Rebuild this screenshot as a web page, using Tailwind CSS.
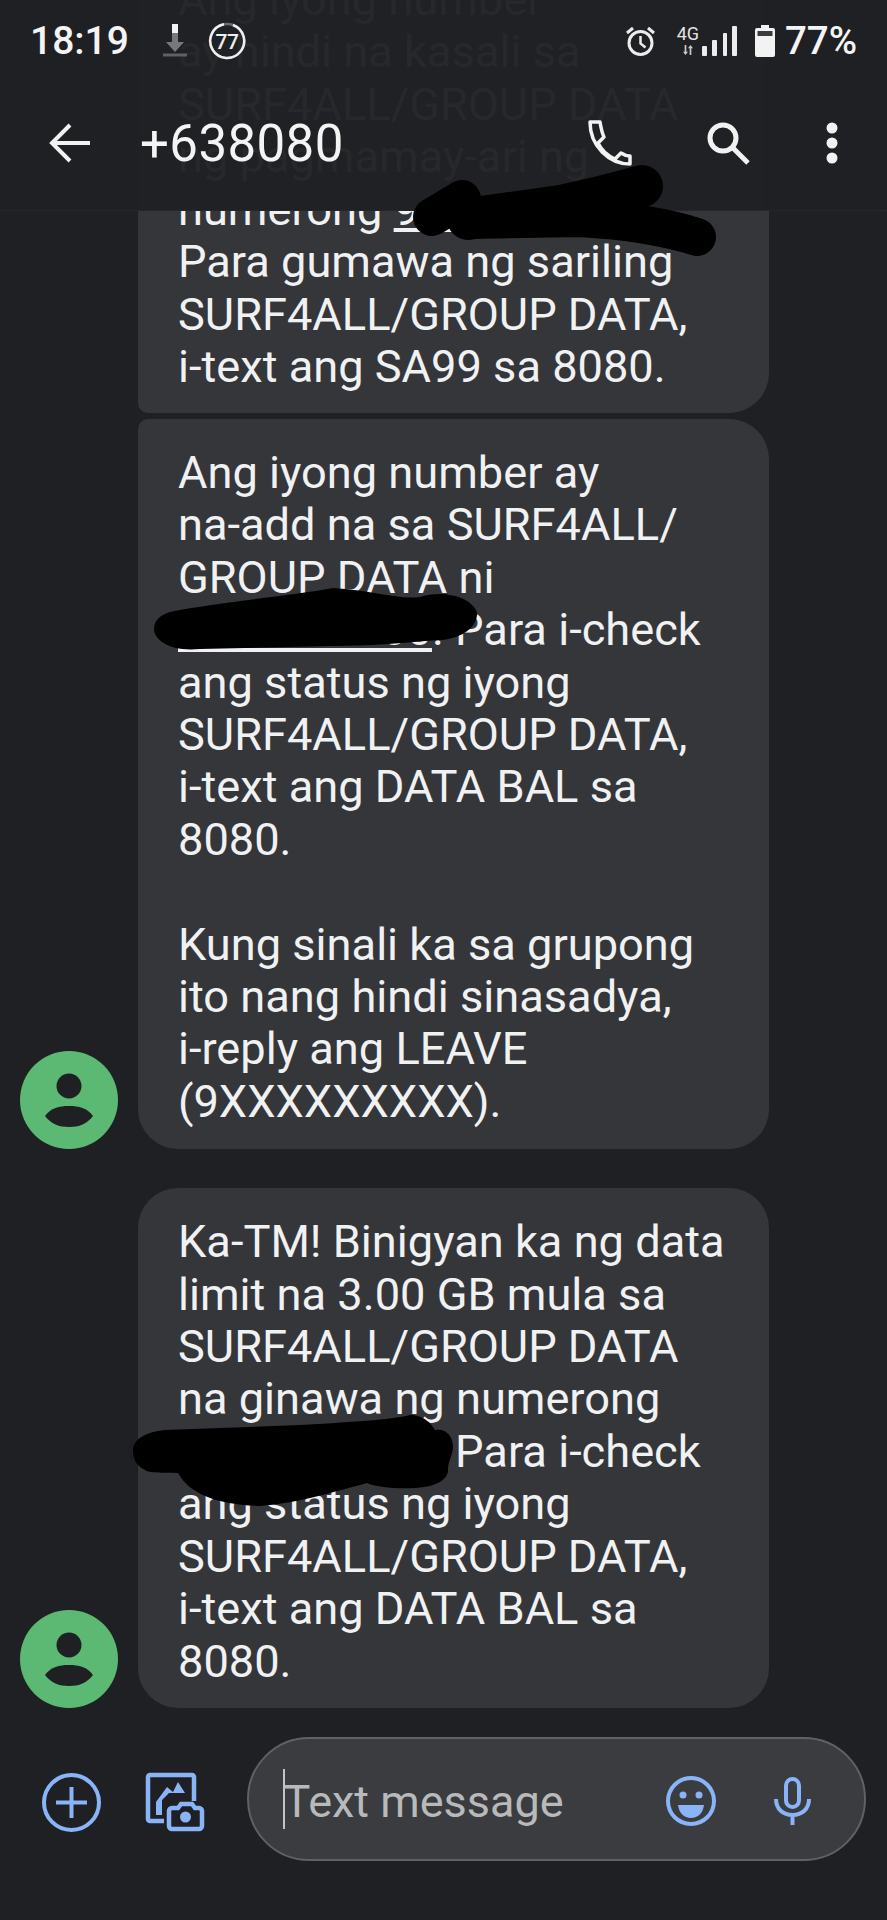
<!DOCTYPE html>
<html>
<head>
<meta charset="utf-8">
<script src="https://cdn.jsdelivr.net/npm/@tailwindcss/browser@4"></script>
</head>
<body class="bg-[#1f2023]">
<div class="relative flex h-[1920px] w-[887px] flex-col overflow-hidden bg-[#1f2023] font-['Roboto',sans-serif] text-[#f0f1f2]">

  <header class="relative h-[211px] shrink-0 overflow-hidden border-b border-dotted border-[#2c2d31]">
    <div class="absolute left-[138px] top-0 h-[211px] w-[625px] bg-[#202124] pl-[40px] text-[45.200px] leading-[52.400px] text-[#27282b]">
      <p class="-mt-[26px]">Ang iyong number</p>
      <p>ay hindi na kasali sa</p>
      <p>SURF4ALL/GROUP DATA</p>
      <p>ng pagmamay-ari ng</p>
    </div>
    <div class="relative flex h-[80px] items-center justify-between pl-[30px] pr-[30px] pt-[2px]">
      <div class="flex items-center">
        <span class="text-[39px] font-medium leading-none text-[#f4f4f4]">18:19</span>
        <svg class="ml-[33px] h-[34px] w-[26px]" viewBox="0 0 26 34" fill="none">
          <path d="M10 9h6v9h6l-9 10-9-10h6z" fill="#77787b"/><rect x="10" y="0" width="6" height="9" fill="#f2f2f2"/><path d="M1 31h24" stroke="#606165" stroke-width="3"/>
        </svg>
        <svg class="ml-[20px] h-[38px] w-[38px]" viewBox="0 0 38 38" fill="none">
          <circle cx="19" cy="19" r="17" stroke="#6b6c6f" stroke-width="2.500"/>
          <path d="M25 3A17 17 0 1 1 16 2.300" stroke="#efefef" stroke-width="2.500"/>
          <text x="19" y="26.500" text-anchor="middle" font-family="Roboto" font-size="21" font-weight="500" letter-spacing="-0.500" fill="#efefef">77</text>
        </svg>
      </div>
      <div class="flex items-center">
        <svg class="h-[32px] w-[31px]" viewBox="0 0 31 32" fill="none" stroke="#ececec">
          <circle cx="15.500" cy="18" r="11.500" stroke-width="3"/><path d="M15.500 11v7.500l5 4" stroke-width="2.500"/><path d="M2 8l6-5M29 8l-6-5" stroke-width="3"/>
        </svg>
        <div class="ml-[20px] flex h-[32px] w-[24px] flex-col items-center text-[#e4e4e4]">
          <span class="text-[18px] leading-[17px]">4G</span>
          <svg class="mt-[3px] h-[10px] w-[12px]" viewBox="0 0 14 12" fill="#c9c9c9"><path d="M3 0h2v8h2l-3 4-3-4h2zM9 12h2V4h2L10 0 7 4h2z"/></svg>
        </div>
        <svg class="ml-[1px] h-[30px] w-[36px]" viewBox="0 0 36 30" fill="#ececec">
          <rect x="1" y="20" width="5" height="10" rx="1"/><rect x="11" y="14" width="5" height="16" rx="1"/><rect x="22" y="7" width="4" height="23" rx="1"/><rect x="31" y="0" width="5" height="30" rx="1"/>
        </svg>
        <svg class="ml-[18px] h-[32px] w-[20px]" viewBox="0 0 20 32" fill="#f2f2f2">
          <path d="M6 0h8v3h4a2 2 0 0 1 2 2v25a2 2 0 0 1-2 2H2a2 2 0 0 1-2-2V5a2 2 0 0 1 2-2h4z"/><rect x="2.500" y="6" width="15" height="5" fill="#3a3b3e"/>
        </svg>
        <span class="ml-[10px] text-[38.500px] font-medium leading-none text-[#f4f4f4]">77%</span>
      </div>
    </div>
    <div class="relative flex h-[104px] items-center pl-[49px] pr-[49px] pt-[22px]">
      <svg class="h-[40px] w-[41px]" viewBox="0 0 41 40" fill="none" stroke="#f2f2f2" stroke-width="4">
        <path d="M41 20H4M21 2L3 20l18 18"/>
      </svg>
      <span class="ml-[50px] text-[51px] leading-none tracking-[0.400px] text-[#f4f4f4]">+638080</span>
      <svg class="ml-auto h-[46px] w-[46px]" viewBox="0 0 46 46" fill="none" stroke="#f2f2f2" stroke-width="3.500" stroke-linejoin="round">
        <path d="M3 2h10c1 6 2 11 4 15l-6 6c4 8 10 13 17 16l6-6c3 2 6 3 9 3v8C22 44 3 26 3 2z"/>
      </svg>
      <svg class="ml-[73px] h-[44px] w-[44px]" viewBox="0 0 44 44" fill="none" stroke="#f2f2f2" stroke-width="5">
        <circle cx="17" cy="17" r="13"/><path d="M26 26l16 16"/>
      </svg>
      <svg class="ml-[76px] h-[42px] w-[12px]" viewBox="0 0 12 42" fill="#f2f2f2">
        <circle cx="6" cy="6" r="5.500"/><circle cx="6" cy="21" r="5.500"/><circle cx="6" cy="36" r="5.500"/>
      </svg>
    </div>
  </header>

  <main class="min-h-0 flex-1 overflow-hidden">
    <article class="ml-[138px] h-[202px] w-[631px] overflow-hidden rounded-bl-[10px] rounded-br-[40px] bg-[#35363a] pl-[40px] text-[45.200px] leading-[52.400px]">
      <p class="-mt-[27px]">numerong <span class="underline">9000000000</span></p>
      <p>Para gumawa ng sariling</p>
      <p>SURF4ALL/GROUP DATA,</p>
      <p>i-text ang SA99 sa 8080.</p>
    </article>

    <div class="mt-[6px] flex items-end">
      <svg class="ml-[20px] h-[98px] w-[98px] shrink-0" viewBox="0 0 98 98">
        <circle cx="49" cy="49" r="49" fill="#5bb974"/><circle cx="49" cy="35" r="12.500" fill="#1f2023"/><path d="M25 65c6-8 14-10 24-10s18 2 24 10c-6 8-14 11-24 11s-18-3-24-11z" fill="#1f2023"/>
      </svg>
      <article class="ml-[20px] w-[631px] rounded-[40px] rounded-tl-[10px] bg-[#35363a] pb-[21px] pl-[40px] pt-[28px] text-[45.200px] leading-[52.400px]">
        <p>Ang iyong number ay</p>
        <p>na-add na sa SURF4ALL/</p>
        <p>GROUP DATA ni</p>
        <p><span class="underline">9000000000</span>. Para i-check</p>
        <p>ang status ng iyong</p>
        <p>SURF4ALL/GROUP DATA,</p>
        <p>i-text ang DATA BAL sa</p>
        <p>8080.</p>
        <p class="h-[52.400px]"></p>
        <p>Kung sinali ka sa grupong</p>
        <p>ito nang hindi sinasadya,</p>
        <p>i-reply ang LEAVE</p>
        <p>(9XXXXXXXXX).</p>
      </article>
    </div>

    <div class="mt-[39px] flex items-end">
      <svg class="ml-[20px] h-[98px] w-[98px] shrink-0" viewBox="0 0 98 98">
        <circle cx="49" cy="49" r="49" fill="#5bb974"/><circle cx="49" cy="35" r="12.500" fill="#1f2023"/><path d="M25 65c6-8 14-10 24-10s18 2 24 10c-6 8-14 11-24 11s-18-3-24-11z" fill="#1f2023"/>
      </svg>
      <article class="ml-[20px] w-[631px] rounded-[40px] bg-[#35363a] pb-[20px] pl-[40px] pt-[28px] text-[45.200px] leading-[52.400px]">
        <p>Ka-TM! Binigyan ka ng data</p>
        <p>limit na 3.00 GB mula sa</p>
        <p>SURF4ALL/GROUP DATA</p>
        <p>na ginawa ng numerong</p>
        <p>9000000000. Para i-check</p>
        <p>ang status ng iyong</p>
        <p>SURF4ALL/GROUP DATA,</p>
        <p>i-text ang DATA BAL sa</p>
        <p>8080.</p>
      </article>
    </div>
  </main>

  <footer class="flex h-[212px] shrink-0 items-start pl-[42px] pr-[21px] pt-[29px]">
    <svg class="mt-[36px] h-[60px] w-[60px] shrink-0" viewBox="0 0 60 60" fill="none" stroke="#8ab4f8" stroke-width="4">
      <circle cx="29.500" cy="29.500" r="27.500"/><path d="M29.500 14v31M14 29.500h31"/>
    </svg>
    <svg class="ml-[43px] mt-[35px] h-[60px] w-[60px] shrink-0" viewBox="0 0 60 60" fill="none" stroke="#8ab4f8" stroke-width="4.500">
      <path d="M19 49H5a2 2 0 0 1-2-2V5a2 2 0 0 1 2-2h42a2 2 0 0 1 2 2v24"/>
      <path d="M11 43V30L22 15l6 5 5-10 7 11H24l-7 7v15z" fill="#8ab4f8" stroke="none"/>
      <path d="M27 36h6l3-4h11l3 4h4a3 3 0 0 1 3 3v15a3 3 0 0 1-3 3H27a3 3 0 0 1-3-3V39a3 3 0 0 1 3-3z"/>
      <circle cx="40.500" cy="45" r="5.500" fill="#8ab4f8" stroke="none"/>
    </svg>
    <div class="ml-[42px] flex h-[124px] flex-1 items-center rounded-[62px] border-2 border-[#5f6164] bg-[#3a3c3f] pl-[34px] pr-[53px] pt-[4px]">
      <span class="-mt-[4px] h-[60px] w-[1.500px] bg-[#c4c4c4]"></span>
      <span class="-ml-[1px] text-[45px] leading-none text-[#b8b9bb]">Text message</span>
      <svg class="ml-auto h-[50px] w-[50px]" viewBox="0 0 50 50">
        <circle cx="25" cy="25" r="23" fill="none" stroke="#8ab4f8" stroke-width="4"/><circle cx="17" cy="19" r="3.500" fill="#8ab4f8"/><circle cx="33" cy="19" r="3.500" fill="#8ab4f8"/><path d="M12 29h26c-1 8-6 13-13 13s-12-5-13-13z" fill="#8ab4f8"/>
      </svg>
      <svg class="ml-[58px] h-[48px] w-[37px]" viewBox="0 0 37 48" fill="none" stroke="#8ab4f8" stroke-width="4">
        <rect x="12" y="2" width="13" height="28" rx="6.500" fill="#3a3c3f"/><path d="M2 22c0 10 7 16 16.500 16S35 32 35 22M18.500 38v10"/>
      </svg>
    </div>
  </footer>

  <svg class="pointer-events-none absolute left-0 top-0 h-[1920px] w-[887px]" viewBox="0 0 887 1920" fill="none" stroke="#000" stroke-linecap="round" stroke-linejoin="round">
    <path d="M432 217L462 199" stroke-width="38"/>
    <path d="M468 219L560 206Q600 198 642 186" stroke-width="42"/>
    <path d="M468 220L580 218Q650 222 697 237" stroke-width="38"/>
    <path fill="#000" stroke="none" d="M170 612C220 602 290 596 333 588C370 590 400 600 420 597C440 590 470 595 477 612C478 625 465 638 440 640C400 643 370 646 330 646L200 649C170 652 155 640 154 630C154 620 160 615 170 612Z"/>
    <path fill="#000" stroke="none" d="M133 1450C133 1440 145 1432 165 1430L300 1425C350 1422 390 1420 410 1415C425 1415 432 1425 435 1430C445 1428 453 1435 453 1447C453 1455 448 1460 448 1470C448 1480 435 1487 415 1488C395 1489 375 1487 367 1483C340 1490 300 1503 260 1506C220 1505 190 1495 178 1473C165 1472 150 1474 145 1470C135 1465 133 1458 133 1450Z"/>
  </svg>
</div>
</body>
</html>
